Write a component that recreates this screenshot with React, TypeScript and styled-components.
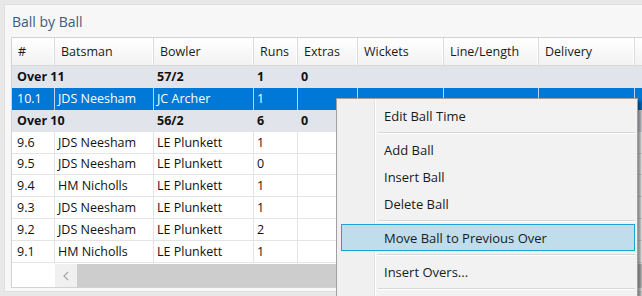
import * as React from 'react';
import styled, { createGlobalStyle, css } from 'styled-components';

const GlobalStyle = createGlobalStyle`
	html, body {
		margin: 0;
		padding: 0;
		background: #e8e8e8;
		overflow: hidden;
		font-family: "Open Sans", "Liberation Sans", sans-serif;
	}
`;

const COLS = '43px 99px 100px 44px 60px 86px 95px 96px 140px';

const Screen = styled.div`
	position: relative;
	width: 642px;
	height: 296px;
	box-sizing: border-box;
	padding: 4px 0 4px 4px;
	overflow: hidden;
`;

const Panel = styled.div`
	height: 100%;
	box-sizing: border-box;
	background: #f7f7f7;
	border: 1px solid #dedede;
	border-right: none;
	display: flex;
	flex-direction: column;
`;

const Title = styled.div`
	height: 32px;
	padding-left: 7px;
	display: flex;
	align-items: center;
	font-size: 14px;
	color: #3b5b80;
`;

const GridBox = styled.div`
	margin-left: 6px;
	flex: 1;
	margin-bottom: 3px;
	background: #fff;
	border: 1px solid #d2d2d2;
	border-right: none;
	overflow: hidden;
	display: flex;
	flex-direction: column;
`;

const HeaderRow = styled.div`
	display: grid;
	grid-template-columns: ${COLS};
	height: 28px;
	background: linear-gradient(#ffffff, #f2f2f2);
	border-bottom: 1px solid #d8d8d8;
	box-sizing: border-box;
`;

const HeaderCell = styled.div`
	display: flex;
	align-items: center;
	padding-left: 6px;
	font-size: 12.5px;
	color: #1b1b1b;
	border-right: 1px solid #dcdcdc;
	box-shadow: inset -1px 0 0 #fff;
	white-space: nowrap;
	overflow: hidden;
`;

const Row = styled.div<{ $kind: 'group' | 'selected' | 'plain' }>`
	display: grid;
	grid-template-columns: ${COLS};
	height: 22px;
	box-sizing: border-box;
	font-size: 12.5px;
	color: #111;
	${p => p.$kind === 'group' && css`
		background: #e1e4eb;
		font-weight: 700;
	`}
	${p => p.$kind === 'selected' && css`
		background: #0078d7;
		color: #fff;
	`}
	${p => p.$kind === 'plain' && css`
		background: #fff;
		border-bottom: 1px solid #e4e4e4;
	`}
`;

const Cell = styled.div<{ $kind: 'group' | 'selected' | 'plain'; $first?: boolean }>`
	display: flex;
	align-items: center;
	padding-left: ${p => (p.$first ? '5px' : '3px')};
	white-space: nowrap;
	overflow: hidden;
	border-right: 1px solid ${p => (p.$kind === 'group' ? 'transparent' : p.$kind === 'selected' ? '#b9d6f0' : '#e4e4e4')};
`;

const ScrollRow = styled.div`
	display: flex;
	height: 23px;
	margin-top: 1px;
`;

const ScrollCorner = styled.div`
	width: 43px;
	background: #fff;
`;

const ScrollArrow = styled.div`
	width: 22px;
	background: #f0f0f0;
	display: flex;
	align-items: center;
	justify-content: center;
`;

const ScrollThumb = styled.div`
	flex: 1;
	background: #cdcdcd;
`;

const Menu = styled.div`
	position: absolute;
	left: 336px;
	top: 98px;
	width: 302px;
	min-height: 230px;
	box-sizing: border-box;
	padding: 3px 2px 3px 4px;
	border: 1px solid #a0a0a0;
	background: linear-gradient(to right, #f0f0f0 37px, #e2e2e2 37px, #e2e2e2 38px, #ffffff 38px, #ffffff 39px, #f2f2f2 39px);
	box-shadow: 3px 3px 3px rgba(0, 0, 0, 0.45);
	font-size: 13px;
	color: #1a1a1a;
`;

const MenuItem = styled.div<{ $active?: boolean }>`
	height: 27px;
	box-sizing: border-box;
	display: flex;
	align-items: center;
	padding-left: 42px;
	border: 1px solid ${p => (p.$active ? '#26a0da' : 'transparent')};
	background: ${p => (p.$active ? '#c0ddeb' : 'transparent')};
	white-space: nowrap;
`;

const MenuSeparator = styled.div`
	height: 1px;
	margin: 3px 0 2px 37px;
	background: #d7d7d7;
	border-bottom: 1px solid #fff;
`;

type Kind = 'group' | 'selected' | 'plain';

const rows: { kind: Kind; cells: string[] }[] = [
	{ kind: 'group', cells: ['Over 11', '', '57/2', '1', '0', '', '', '', ''] },
	{ kind: 'selected', cells: ['10.1', 'JDS Neesham', 'JC Archer', '1', '', '', '', '', ''] },
	{ kind: 'group', cells: ['Over 10', '', '56/2', '6', '0', '', '', '', ''] },
	{ kind: 'plain', cells: ['9.6', 'JDS Neesham', 'LE Plunkett', '1', '', '', '', '', ''] },
	{ kind: 'plain', cells: ['9.5', 'JDS Neesham', 'LE Plunkett', '0', '', '', '', '', ''] },
	{ kind: 'plain', cells: ['9.4', 'HM Nicholls', 'LE Plunkett', '1', '', '', '', '', ''] },
	{ kind: 'plain', cells: ['9.3', 'JDS Neesham', 'LE Plunkett', '1', '', '', '', '', ''] },
	{ kind: 'plain', cells: ['9.2', 'JDS Neesham', 'LE Plunkett', '2', '', '', '', '', ''] },
	{ kind: 'plain', cells: ['9.1', 'HM Nicholls', 'LE Plunkett', '1', '', '', '', '', ''] }
];

const headers = ['#', 'Batsman', 'Bowler', 'Runs', 'Extras', 'Wickets', 'Line/Length', 'Delivery', ''];

export default function App() {
	return (
		<>
			<GlobalStyle />
			<Screen>
				<Panel>
					<Title>Ball by Ball</Title>
					<GridBox>
						<HeaderRow>
							{headers.map((h, i) => <HeaderCell key={i}>{h}</HeaderCell>)}
						</HeaderRow>
						{rows.map((r, i) => (
							<Row key={i} $kind={r.kind}>
								{r.kind === 'group' ? (
									<>
										<Cell $kind={r.kind} $first style={{ gridColumn: 'span 2' }}>{r.cells[0]}</Cell>
										{r.cells.slice(2).map((c, j) => <Cell key={j} $kind={r.kind}>{c}</Cell>)}
									</>
								) : (
									r.cells.map((c, j) => <Cell key={j} $kind={r.kind} $first={j === 0}>{c}</Cell>)
								)}
							</Row>
						))}
						<ScrollRow>
							<ScrollCorner />
							<ScrollArrow>
								<svg width="6" height="10" viewBox="0 0 6 10">
									<path d="M5 1 L1 5 L5 9" fill="none" stroke="#a6a6a6" strokeWidth="1.2" />
								</svg>
							</ScrollArrow>
							<ScrollThumb />
						</ScrollRow>
					</GridBox>
				</Panel>
				<Menu>
					<MenuItem>Edit Ball Time</MenuItem>
					<MenuSeparator />
					<MenuItem>Add Ball</MenuItem>
					<MenuItem>Insert Ball</MenuItem>
					<MenuItem>Delete Ball</MenuItem>
					<MenuSeparator />
					<MenuItem $active>Move Ball to Previous Over</MenuItem>
					<MenuSeparator />
					<MenuItem>Insert Overs...</MenuItem>
					<MenuSeparator />
				</Menu>
			</Screen>
		</>
	);
}
